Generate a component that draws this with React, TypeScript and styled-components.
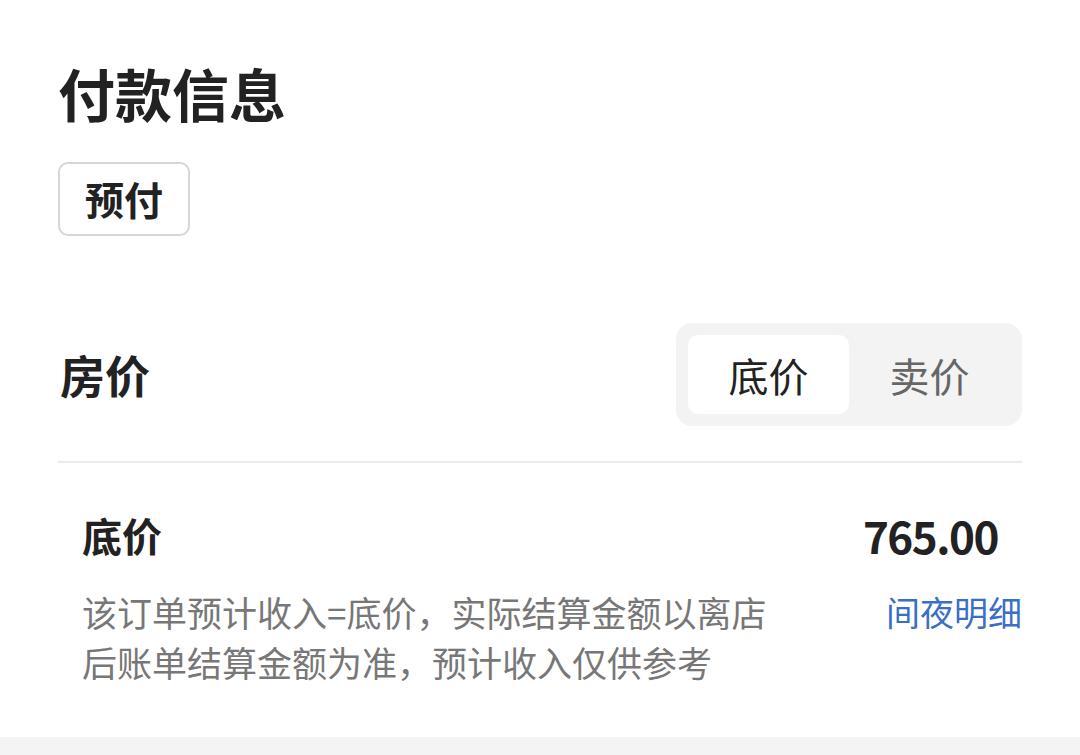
import * as React from 'react';
import styled, { createGlobalStyle } from 'styled-components';

const GlobalStyle = createGlobalStyle`
  html, body {
    margin: 0;
    padding: 0;
    background: #ffffff;
  }
  body {
    font-family: "Noto Sans CJK SC", "Noto Sans", sans-serif;
    color: #222222;
  }
`;

const Page = styled.div`
  width: 1080px;
  height: 755px;
  display: flex;
  flex-direction: column;
  background: #ffffff;
  overflow: hidden;
`;

const Card = styled.div`
  flex: 1;
  padding: 64px 58px 0;
  display: flex;
  flex-direction: column;
`;

const Title = styled.h1`
  margin: 0;
  font-size: 57px;
  line-height: 57px;
  font-weight: 700;
  color: #222;
`;

const TagRow = styled.div`
  display: flex;
  margin-top: 41px;
`;

const Tag = styled.span`
  padding: 15px 25px 16px;
  border: 2px solid #d6d6d6;
  border-radius: 10px;
  font-size: 39px;
  line-height: 39px;
  font-weight: 700;
  color: #222;
`;

const PriceHeader = styled.div`
  display: flex;
  align-items: center;
  justify-content: space-between;
  margin-top: 87px;
  padding-bottom: 35px;
  border-bottom: 2px solid #ebebeb;
`;

const SectionTitle = styled.div`
  margin-left: 2px;
  font-size: 45px;
  font-weight: 700;
  line-height: 1;
`;

const Segmented = styled.div`
  display: flex;
  padding: 12px;
  background: #f3f3f3;
  border-radius: 16px;
`;

const Segment = styled.div<{ $active?: boolean }>`
  width: 161px;
  height: 79px;
  display: flex;
  align-items: center;
  justify-content: center;
  border-radius: 10px;
  font-size: 40px;
  background: ${(p) => (p.$active ? '#ffffff' : 'transparent')};
  color: ${(p) => (p.$active ? '#222222' : '#666666')};
`;

const Detail = styled.div`
  padding: 52px 0 0 24px;
`;

const DetailTop = styled.div`
  display: flex;
  align-items: center;
  justify-content: space-between;
  padding-right: 24px;
`;

const DetailLabel = styled.div`
  font-size: 40px;
  line-height: 40px;
  font-weight: 700;
`;

const Amount = styled.div`
  font-size: 44px;
  line-height: 40px;
  font-weight: 700;
  letter-spacing: -1.5px;
`;

const DetailBottom = styled.div`
  display: flex;
  justify-content: space-between;
  align-items: flex-start;
  margin-top: 32px;
`;

const Note = styled.p`
  margin: 0;
  width: 700px;
  font-size: 35px;
  line-height: 50px;
  color: #777777;
`;

const Link = styled.a`
  font-size: 34px;
  line-height: 50px;
  color: #3a6fc6;
  text-decoration: none;
`;

const Footer = styled.div`
  height: 18px;
  background: #f4f4f4;
`;

export default function App() {
  return (
    <Page>
      <GlobalStyle />
      <Card>
        <Title>付款信息</Title>
        <TagRow>
          <Tag>预付</Tag>
        </TagRow>
        <PriceHeader>
          <SectionTitle>房价</SectionTitle>
          <Segmented>
            <Segment $active>底价</Segment>
            <Segment>卖价</Segment>
          </Segmented>
        </PriceHeader>
        <Detail>
          <DetailTop>
            <DetailLabel>底价</DetailLabel>
            <Amount>765.00</Amount>
          </DetailTop>
          <DetailBottom>
            <Note>该订单预计收入=底价，实际结算金额以离店后账单结算金额为准，预计收入仅供参考</Note>
            <Link>间夜明细</Link>
          </DetailBottom>
        </Detail>
      </Card>
      <Footer />
    </Page>
  );
}
